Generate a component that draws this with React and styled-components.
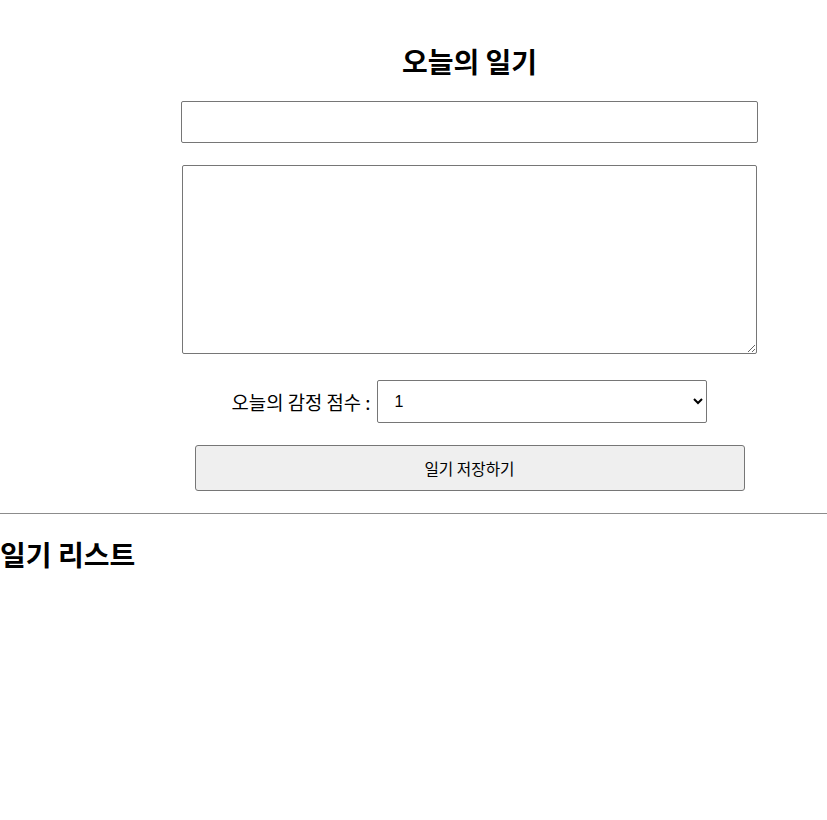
import React from "react";
import styled, { createGlobalStyle } from "styled-components";

const Global = createGlobalStyle`
  html, body { margin: 0; padding: 0; background: #fff; }
  body { font-family: "Noto Sans CJK KR", "Noto Sans", sans-serif; color: #000; }
`;

const Editor = styled.div`
  width: 577px;
  margin-left: 181px;
  display: flex;
  flex-direction: column;
  align-items: center;
  padding-top: 45px;
`;

const Title = styled.h2`
  margin: 0 0 24px;
  font-size: 28px;
  font-weight: 700;
  line-height: 32px;
  text-align: center;
`;

const TitleInput = styled.input`
  box-sizing: border-box;
  width: 577px;
  height: 42px;
  margin: 0;
  border: 1px solid #767676;
  border-radius: 2px;
  padding: 0 10px;
  font-size: 13.33px;
  background: #fff;
`;

const ContentArea = styled.textarea`
  box-sizing: border-box;
  width: 575px;
  height: 189px;
  margin: 22px 0 0;
  border: 1px solid #767676;
  border-radius: 2px;
  padding: 10px;
  font-size: 13.33px;
  background: #fff;
  resize: both;
`;

const ScoreRow = styled.div`
  margin-top: 26px;
  display: flex;
  align-items: center;
  gap: 7px;
`;

const ScoreLabel = styled.span`
  font-size: 18.8px;
  line-height: 24px;
  color: #000;
`;

const ScoreSelect = styled.select`
  box-sizing: border-box;
  width: 330px;
  height: 43px;
  border: 1px solid #767676;
  border-radius: 2px;
  padding: 0 12px;
  font: 400 16px "Liberation Sans", Arial, sans-serif;
  background: #fff;
  color: #000;
`;

const SaveButton = styled.button`
  box-sizing: border-box;
  width: 550px;
  height: 46px;
  margin-top: 22px;
  border: 1px solid #767676;
  border-radius: 3px;
  background: #efefef;
  font-size: 15.7px;
  font-family: "Noto Sans CJK KR", sans-serif;
  color: #000;
`;

const Divider = styled.hr`
  margin: 22px 0 0;
  border: 0;
  border-top: 1px solid #8c8c8c;
  height: 0;
`;

const ListTitle = styled.h2`
  margin: 22px 0 0;
  font-size: 28px;
  font-weight: 700;
  line-height: 36px;
`;

export default function App() {
  return (
    <>
      <Global />
      <Editor>
        <Title>오늘의 일기</Title>
        <TitleInput />
        <ContentArea />
        <ScoreRow>
          <ScoreLabel>오늘의 감정 점수 :</ScoreLabel>
          <ScoreSelect defaultValue="1">
            {[1, 2, 3, 4, 5].map((n) => (
              <option key={n} value={n}>{n}</option>
            ))}
          </ScoreSelect>
        </ScoreRow>
        <SaveButton>일기 저장하기</SaveButton>
      </Editor>
      <Divider />
      <ListTitle>일기 리스트</ListTitle>
    </>
  );
}
